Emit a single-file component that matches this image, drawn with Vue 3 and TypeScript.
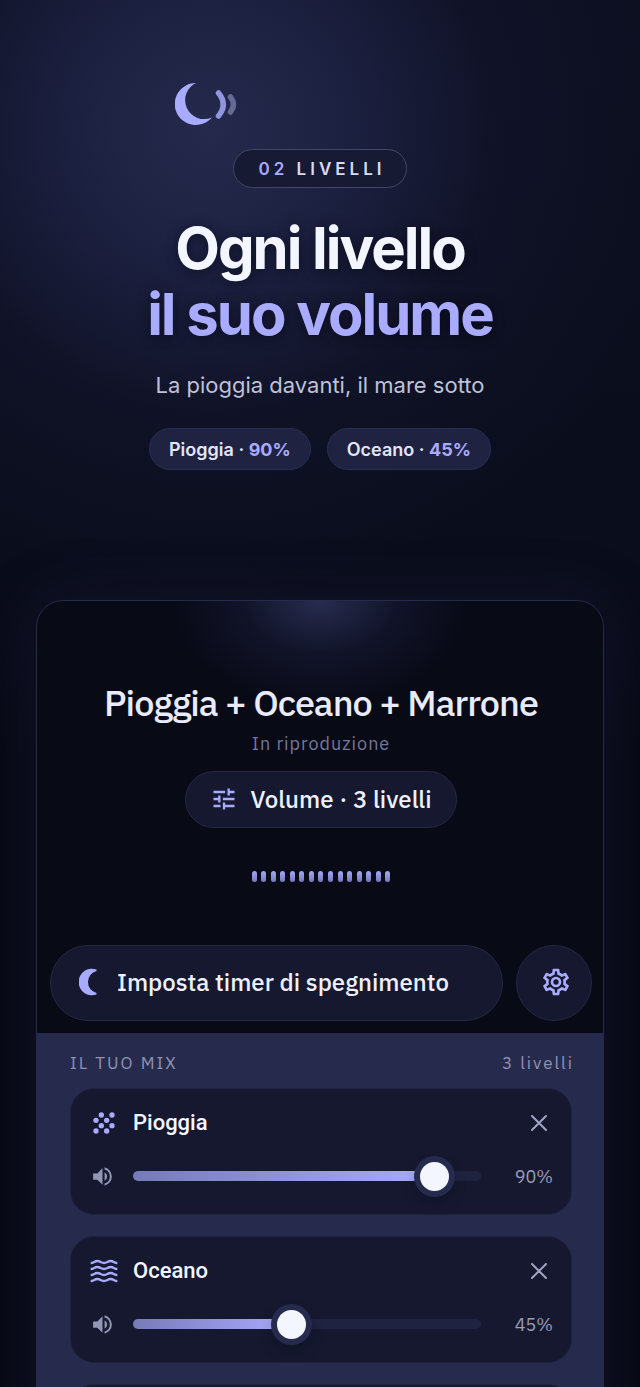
<script setup lang="ts">
import { ref } from 'vue'

interface Level {
  id: string
  name: string
  volume: number
}

const levels = ref<Level[]>([
  { id: 'rain', name: 'Pioggia', volume: 90 },
  { id: 'ocean', name: 'Oceano', volume: 45 },
])

const bars = 15
</script>

<template>
  <main class="page">
    <header class="intro">
      <svg class="logo" viewBox="0 0 64 44" aria-hidden="true">
        <path d="M21.2 1A21 21 0 1 0 36.900 35.400A18.700 18.700 0 0 1 21.200 1Z" fill="#a9abff" />
        <path d="M43.500 11Q53 22.500 43.500 34" fill="none" stroke="#9194de" stroke-width="5.500" stroke-linecap="round" />
        <path d="M55.500 15Q61.500 22.500 55.500 30" fill="none" stroke="#656a96" stroke-width="5.500" stroke-linecap="round" />
      </svg>
      <p class="badge"><span>02</span> LIVELLI</p>
      <h1>Ogni livello<br /><span>il suo volume</span></h1>
      <p class="tagline">La pioggia davanti, il mare sotto</p>
      <div class="chips">
        <span v-for="level in levels" :key="level.id" class="chip">
          {{ level.name }} · <b>{{ level.volume }}%</b>
        </span>
      </div>
    </header>

    <section class="phone">
      <div class="player">
        <h2>Pioggia + Oceano + Marrone</h2>
        <p class="status">In riproduzione</p>
        <button class="pill volume" type="button">
          <svg viewBox="0 0 24 24" aria-hidden="true">
            <path fill="#a9abff" d="M3 17v2h6v-2H3zM3 5v2h10V5H3zm10 16v-2h8v-2h-8v-2h-2v6h2zM7 9v2H3v2h4v2h2V9H7zm14 4v-2H11v2h10zm-6-4h2V7h4V5h-4V3h-2v6z" />
          </svg>
          Volume · 3 livelli
        </button>
        <div class="bars" aria-hidden="true"><i v-for="n in bars" :key="n"></i></div>
        <div class="actions">
          <button class="pill timer" type="button">
            <svg viewBox="0 0 18 28" aria-hidden="true">
              <path fill="#a9abff" d="M17.500 1.500A13.300 13.300 0 1 0 17.500 26.500V25Q9 22 9 14T17.500 3Z" />
            </svg>
            Imposta timer di spegnimento
          </button>
          <button class="pill settings" type="button" aria-label="Impostazioni">
            <svg viewBox="0 0 24 24" aria-hidden="true">
              <path fill="#a9abff" d="M19.430 12.980c.04-.32.07-.64.07-.98s-.03-.66-.07-.98l2.110-1.650c.19-.15.24-.42.12-.64l-2-3.460a.5.5 0 0 0-.61-.22l-2.490 1a7.300 7.300 0 0 0-1.690-.98l-.38-2.650A.49.49 0 0 0 14 2h-4a.49.49 0 0 0-.49.42l-.38 2.650c-.61.25-1.170.59-1.690.98l-2.490-1a.5.5 0 0 0-.61.22l-2 3.460c-.13.22-.07.49.12.64l2.110 1.650c-.04.32-.07.65-.07.98s.03.66.07.98l-2.110 1.650c-.19.15-.24.42-.12.64l2 3.460c.12.22.39.3.61.22l2.490-1c.52.4 1.080.73 1.690.98l.38 2.650c.03.24.24.42.49.42h4c.25 0 .46-.18.49-.42l.38-2.650c.61-.25 1.170-.59 1.690-.98l2.490 1c.23.08.49 0 .61-.22l2-3.460c.12-.22.07-.49-.12-.64l-2.110-1.650zm-1.980-1.710c.04.31.05.52.05.73s-.02.43-.05.73l-.14 1.130.89.7 1.080.84-.7 1.210-1.270-.51-1.040-.42-.9.68c-.43.32-.84.56-1.250.73l-1.060.43-.16 1.130-.2 1.350h-1.400l-.19-1.350-.16-1.130-1.060-.43c-.43-.18-.83-.41-1.230-.71l-.91-.7-1.060.43-1.270.51-.7-1.210 1.080-.84.89-.7-.14-1.130c-.03-.31-.05-.54-.05-.74s.02-.43.05-.73l.14-1.130-.89-.7-1.080-.84.7-1.210 1.270.51 1.040.42.9-.68c.43-.32.84-.56 1.250-.73l1.060-.43.16-1.130.2-1.350h1.390l.19 1.350.16 1.130 1.060.43c.43.18.83.41 1.230.71l.91.7 1.060-.43 1.270-.51.7 1.210-1.070.85-.89.7.14 1.130zM12 8a4 4 0 1 0 0 8 4 4 0 0 0 0-8zm0 6a2 2 0 1 1 0-4 2 2 0 0 1 0 4z" />
            </svg>
          </button>
        </div>
      </div>

      <div class="mix">
        <div class="mix-head">
          <h3>IL TUO MIX</h3>
          <p>3 livelli</p>
        </div>
        <article v-for="level in levels" :key="level.id" class="card">
          <div class="row">
            <svg v-if="level.id === 'rain'" class="kind" viewBox="0 0 84 84" aria-hidden="true">
              <g fill="#a9abff">
                <circle cx="34" cy="18" r="8" /><circle cx="66" cy="18" r="8" />
                <circle cx="18" cy="34" r="8" /><circle cx="50" cy="34" r="8" />
                <circle cx="34" cy="50" r="8" /><circle cx="66" cy="50" r="8" />
                <circle cx="18" cy="66" r="8" /><circle cx="50" cy="66" r="8" />
              </g>
            </svg>
            <svg v-else class="kind" viewBox="0 0 84 84" aria-hidden="true">
              <g fill="none" stroke="#a9abff" stroke-width="7">
                <path v-for="y in [18, 36, 54, 72]" :key="y" :d="`M2 ${y}C12 ${y} 13 ${y - 6} 22 ${y - 6}S33 ${y} 42 ${y}S53 ${y - 6} 62 ${y - 6}S72 ${y} 82 ${y}`" />
              </g>
            </svg>
            <label :for="level.id">{{ level.name }}</label>
            <button class="remove" type="button" :aria-label="`Rimuovi ${level.name}`">
              <svg viewBox="0 0 16 16" aria-hidden="true">
                <path d="M1 1L15 15M15 1L1 15" stroke="#a1a3c3" stroke-width="2" stroke-linecap="round" />
              </svg>
            </button>
          </div>
          <div class="row">
            <svg class="speaker" viewBox="0 0 24 24" aria-hidden="true">
              <path fill="#9496b5" d="M3 9v6h4l5 5V4L7 9H3zm13.500 3A4.500 4.500 0 0 0 14 7.970v8.050A4.500 4.500 0 0 0 16.500 12zM14 3.230v2.060a7 7 0 0 1 0 13.420v2.060a9 9 0 0 0 0-17.540z" />
            </svg>
            <input
              :id="level.id"
              v-model.number="level.volume"
              type="range"
              min="0"
              max="100"
              :style="{ '--level': level.volume / 100 }"
            />
            <output :for="level.id">{{ level.volume }}%</output>
          </div>
        </article>
        <article class="card" aria-hidden="true"></article>
      </div>
    </section>
  </main>
</template>

<style>
body {
  margin: 0;
  background: #080a16;
}
</style>

<style scoped>
* {
  box-sizing: border-box;
}

h1, h2, h3, p {
  margin: 0;
}

.page {
  height: 100vh;
  overflow: hidden;
  padding: 82px 36px 0;
  display: flex;
  flex-direction: column;
  background:
    radial-gradient(circle 470px at 210px 130px, #252a4c 0, #1c2040 30%, rgba(18, 21, 43, 0.7) 60%, rgba(10, 13, 28, 0) 100%),
    linear-gradient(#0c0f20, #0a0d1b 540px, #070914 760px);
  font-family: Inter, "Liberation Sans", sans-serif;
  color: #f4f6ff;
}

.intro {
  align-self: center;
  height: 518px;
  flex: none;
  display: flex;
  flex-direction: column;
  align-items: center;
}

.logo {
  width: 64px;
  height: 44px;
  align-self: flex-start;
  margin-left: 28px;
}

.badge {
  margin-top: 23px;
  height: 39px;
  padding: 0 20px 0 24px;
  border: 1px solid #42466b;
  border-radius: 20px;
  background: #171a33;
  color: #d9dbf0;
  font-size: 17px;
  font-weight: 600;
  line-height: 38px;
  letter-spacing: 4px;
}

.badge span,
h1 span,
.chip b {
  color: #a9abff;
}

h1 {
  margin-top: 27px;
  font-size: 58px;
  line-height: 66px;
  font-weight: 700;
  letter-spacing: -2px;
  text-align: center;
  white-space: nowrap;
  text-shadow: 0 2px 12px rgba(5, 7, 18, 0.6);
}

.tagline {
  margin-top: 24px;
  font-size: 22px;
  line-height: 28px;
  color: #bfc1d9;
}

.chips {
  display: flex;
  gap: 16px;
  margin-top: 29px;
}

.chip {
  height: 42px;
  padding: 0 19px;
  border: 1px solid #292d51;
  border-radius: 21px;
  background: #1f2240;
  color: #e4e6f7;
  font-size: 18px;
  font-weight: 600;
  line-height: 41px;
  white-space: nowrap;
}

.chip b {
  font-weight: 700;
}

.phone {
  flex: none;
  border: 1px solid #262b4e;
  border-radius: 27px 27px 0 0;
  overflow: hidden;
  background: #080a16;
  box-shadow: 0 0 60px rgba(42, 47, 92, 0.3);
  font-family: "IBM Plex Sans", "Open Sans", sans-serif;
}

.player {
  display: flex;
  flex-direction: column;
  align-items: center;
  padding: 78px 11px 12px 13px;
  background: radial-gradient(ellipse 150px 105px at 50% 0, #282c50 0, #1c203b 25%, #111429 50%, rgba(8, 10, 22, 0) 100%);
}

h2 {
  font-size: 36px;
  font-weight: 500;
  line-height: 48px;
  letter-spacing: -1px;
  color: #e9ebfb;
  white-space: nowrap;
}

.status {
  margin-top: 4px;
  font-size: 18px;
  line-height: 26px;
  letter-spacing: 1px;
  color: #74779c;
}

.pill {
  display: flex;
  align-items: center;
  border: 1px solid #242845;
  background: #15182f;
  color: #eef0ff;
  font-family: inherit;
  font-size: 24px;
  font-weight: 500;
  line-height: 30px;
  white-space: nowrap;
}

.volume {
  gap: 12px;
  height: 57px;
  margin-top: 14px;
  padding: 0 24px 2px;
  border-radius: 29px;
}

.volume svg {
  width: 28px;
  height: 28px;
}

.bars {
  display: flex;
  justify-content: space-between;
  width: 139px;
  margin: 43px 0 63px;
}

.bars i {
  width: 5px;
  height: 11px;
  border-radius: 3px;
  background: linear-gradient(#a4a7f8, #777ab8);
}

.actions {
  display: flex;
  gap: 13px;
  width: 100%;
}

.timer {
  flex: 1;
  gap: 20px;
  height: 76px;
  padding: 0 28px 2px;
  border-radius: 38px;
}

.timer svg {
  width: 18px;
  height: 28px;
}

.settings {
  justify-content: center;
  width: 76px;
  height: 76px;
  padding: 0 0 2px 3px;
  border-radius: 50%;
}

.settings svg {
  width: 32px;
  height: 32px;
}

.mix {
  display: flex;
  flex-direction: column;
  gap: 21px;
  padding: 17px 31px 32px 33px;
  background: #262b4e;
}

.mix-head {
  display: flex;
  justify-content: space-between;
  margin: 0 -2px -9px 0;
  color: #8f92b2;
}

.mix-head h3,
.mix-head p {
  font-size: 17px;
  line-height: 26px;
  font-weight: 400;
  letter-spacing: 2px;
}

.card {
  min-height: 127px;
  padding: 16px 18px 16px 19px;
  border: 1px solid #1f2340;
  border-radius: 24px;
  background: #15182f;
}

.row {
  display: flex;
  align-items: center;
  height: 36px;
}

.row + .row {
  margin-top: 17px;
}

.kind {
  width: 28px;
  height: 28px;
  margin-right: 15px;
}

label {
  flex: 1;
  font: 500 22px/28px Roboto, sans-serif;
  color: #f4f6ff;
}

.remove {
  display: grid;
  place-items: center;
  width: 28px;
  height: 28px;
  padding: 0;
  border: 0;
  background: none;
}

.remove svg {
  width: 16px;
  height: 16px;
}

.speaker {
  width: 25px;
  height: 25px;
  margin-right: 18px;
}

input {
  --thumb: 29px;
  flex: 1;
  min-width: 0;
  height: 10px;
  margin: 0;
  border-radius: 5px;
  appearance: none;
  background:
    linear-gradient(90deg, #777ab8, #a9abff) 0 0 / calc(var(--thumb) / 2 + (100% - var(--thumb)) * var(--level)) 100% no-repeat,
    #1f2240;
}

input::-webkit-slider-thumb {
  appearance: none;
  width: 29px;
  height: 29px;
  border-radius: 50%;
  background: #f4f6ff;
  box-shadow: 0 0 0 6px #262b4e, 0 8px 14px 4px rgba(8, 10, 22, 0.3);
}

output {
  width: 72px;
  font-size: 18px;
  color: #9a9cbb;
  text-align: right;
}
</style>
